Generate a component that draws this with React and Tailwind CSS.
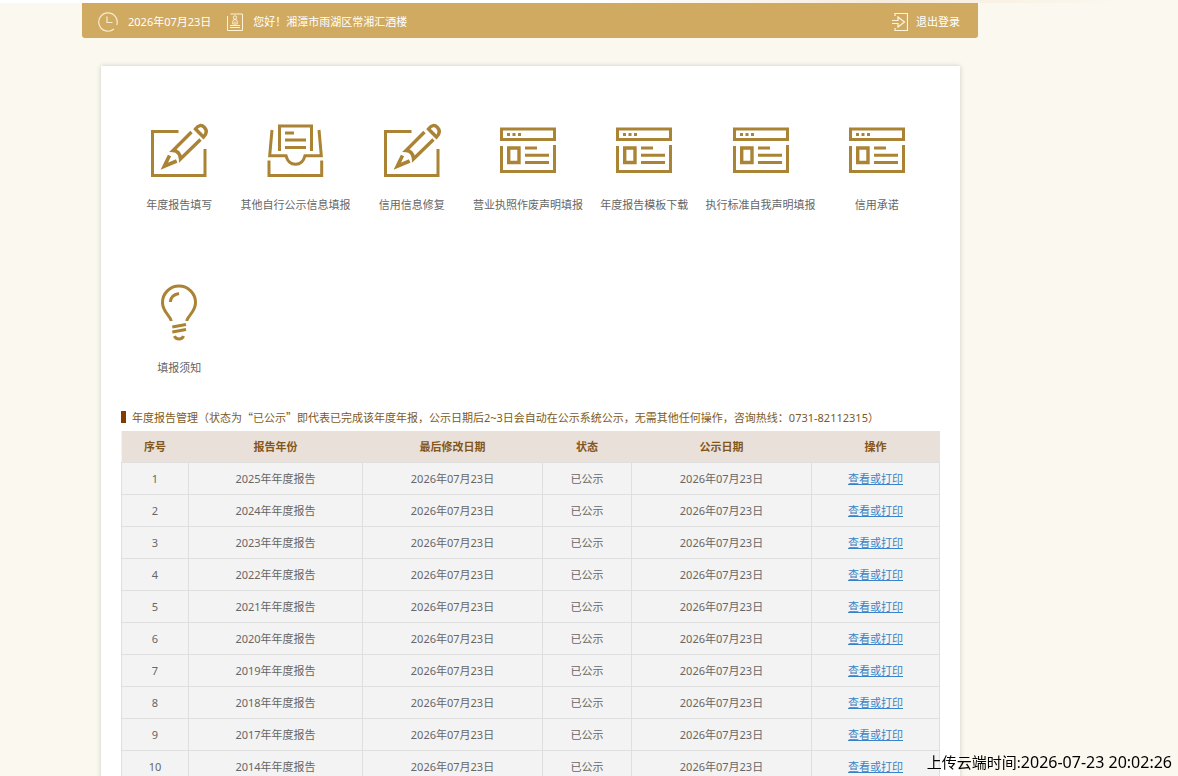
import React from "react";

function EditIcon() {
  return (
    <svg viewBox="0 0 60 60" className="size-15" fill="none" stroke="#ab8335" strokeWidth="3" aria-hidden="true">
      <path d="M29.5 11.5H3.5V55.5H56V29" />
      <path d="M42.5 12L24 30.5Q31 31 31.5 39L51.5 19.5" strokeWidth="3.400" />
      <path d="M46.500 9Q51 3 55.500 7.500Q59.500 12 54.500 17Z" strokeWidth="3.400" />
      <path d="M20.500 35.500L15.300 46.200L27.700 41" strokeWidth="3.600" />
      <path d="M13.300 48L16.500 40.500L21 45Z" fill="#ab8335" stroke="none" />
    </svg>
  );
}

function InboxIcon() {
  return (
    <svg viewBox="0 0 60 60" className="size-15" fill="none" stroke="#ab8335" strokeWidth="3" aria-hidden="true">
      <path d="M7 10L4.700 35.700H21C22.500 42 26 44.300 30.500 44.300S38.500 42 40 35.700H56.300L54 10" />
      <path d="M4 40.500V55.500H56.700V40.500" />
      <path d="M14.500 31V6H46.500V31" />
      <path d="M20 13H29M20 20H41M20 27.500H41" />
    </svg>
  );
}

function WindowIcon() {
  return (
    <svg viewBox="0 0 60 60" className="size-15" fill="none" stroke="#ab8335" strokeWidth="3" aria-hidden="true">
      <path d="M3.500 9H56.500V19.500H3.500Z" />
      <path d="M9 14.500H12M14.500 14.500H17.500M20 14.500H23" />
      <path d="M3.500 26V51.500H56.500V25" />
      <path d="M10.700 28H21V42.500H10.700Z" strokeWidth="3.400" />
      <path d="M27 28H39M27 35.200H51M27 42.500H51" />
    </svg>
  );
}

function BulbIcon() {
  return (
    <svg viewBox="0 0 60 60" className="size-15" fill="none" stroke="#ab8335" strokeWidth="3" aria-hidden="true">
      <path d="M22.300 38C21 32 13.500 29 13.500 19.500A16.500 16.500 0 0 1 46.500 19.500C46.500 29 39 32 37.700 38" />
      <path d="M21.300 19Q21.500 12 30 10.500" />
      <path d="M23.300 44L37 41.500M23.300 49L37 46.500" />
      <path d="M25.500 53Q26.500 56 30 56T34.500 53" />
    </svg>
  );
}

function ClockIcon() {
  return (
    <svg viewBox="0 0 20 20" className="size-5" fill="none" stroke="#f8ead0" strokeWidth="1.2" aria-hidden="true">
      <path d="M16 17A9.200 9.200 0 1 1 18.700 13" />
      <path d="M9 4.500V10.500H14.500" />
    </svg>
  );
}

function BadgeIcon() {
  return (
    <svg viewBox="0 0 16 18" className="h-[18px] w-4" fill="none" stroke="#fdf1d8" aria-hidden="true">
      <path d="M3.500 1H15.500V17.500H0.500V3" />
      <path d="M3 12.500H13M3 14.500H13" />
      <circle cx="8" cy="4.500" r="1.700" />
      <path d="M5.800 11V8.500Q5.800 6.500 8 6.500T10.200 8.500V11ZM8 8.500V10" />
    </svg>
  );
}

function ExitIcon() {
  return (
    <svg viewBox="0 0 16 18" className="h-[18px] w-4" fill="none" stroke="#fff5df" aria-hidden="true">
      <path d="M3 3V0.500H15.500V17.500H3V15" strokeWidth="1.200" />
      <path d="M0 7.500H6V4L12.500 9L6 14V10.500H0" strokeWidth="1.200" />
    </svg>
  );
}

const entries = [
  ["年度报告填写", EditIcon],
  ["其他自行公示信息填报", InboxIcon],
  ["信用信息修复", EditIcon],
  ["营业执照作废声明填报", WindowIcon],
  ["年度报告模板下载", WindowIcon],
  ["执行标准自我声明填报", WindowIcon],
  ["信用承诺", WindowIcon],
  ["填报须知", BulbIcon],
];

const headings = [
  ["序号", "w-[67px]"],
  ["报告年份", "w-[174px]"],
  ["最后修改日期", "w-[180px]"],
  ["状态", "w-[89px]"],
  ["公示日期", "w-[180px]"],
  ["操作", "w-[128px]"],
];

const years = [2025, 2024, 2023, 2022, 2021, 2020, 2019, 2018, 2017, 2014];
const cell = "h-8 border border-[#dfdfdf] px-0 pt-0.5 pb-0";

export default function App() {
  return (
    <div className="h-screen overflow-hidden bg-[#fbf8ef] font-['Noto_Sans','Noto_Sans_CJK_SC',sans-serif] text-[11px] leading-4 text-[#666]">
      <div className="h-[3px] bg-linear-to-r from-white from-50% via-[#f6ecdd] via-75% to-[#fbf8ef] to-95%" />
      <div className="ml-[82px] max-w-[896px]">
        <header className="flex h-[35px] items-center rounded-b-[3px] bg-[#d0aa61] pt-0.5 pr-[18px] pl-4 text-white">
          <ClockIcon />
          <time className="ml-[10px]">2026年07月23日</time>
          <span className="ml-4 flex items-center gap-[10px]">
            <BadgeIcon />
            您好！湘潭市雨湖区常湘汇酒楼
          </span>
          <a href="#logout" className="ml-auto flex items-center gap-2">
            <ExitIcon />
            退出登录
          </a>
        </header>

        <main className="mr-[18px] ml-[19px] mt-7 bg-white px-5 pt-[54px] pb-10 shadow-[0_0_5px_rgba(0,0,0,0.18)]">
          <nav className="grid grid-cols-7 gap-y-[70px] pr-[5px]">
            {entries.map(([label, Icon]) => (
              <a key={label} href="#entry" className="flex flex-col items-center gap-[17px] whitespace-nowrap">
                <Icon />
                <span>{label}</span>
              </a>
            ))}
          </nav>

          <h2 className="mt-[33px] flex h-4 items-center gap-[6px] whitespace-nowrap text-[#7d5a1e]">
            <span className="h-3 w-[5px] bg-[#833c00]" />
            <span>
              年度报告管理（状态为
              <span className="font-['Noto_Sans_CJK_SC',sans-serif]">“已公示”</span>
              即代表已完成该年度年报，公示日期后2~3日会自动在公示系统公示，无需其他任何操作，咨询热线：0731-82112315）
            </span>
          </h2>

          <table className="mt-[6px] w-full table-fixed border-collapse bg-[#f3f3f3] text-center">
            <thead className="bg-[#e9e1d9] text-[#83561c]">
              <tr>
                {headings.map(([label, width]) => (
                  <th key={label} scope="col" className={`h-[31px] px-0 pt-0.5 pb-0 font-bold ${width}`}>
                    {label}
                  </th>
                ))}
              </tr>
            </thead>
            <tbody>
              {years.map((year, i) => (
                <tr key={year}>
                  <td className={cell}>{i + 1}</td>
                  <td className={cell}>{year}年年度报告</td>
                  <td className={cell}>2026年07月23日</td>
                  <td className={cell}>已公示</td>
                  <td className={cell}>2026年07月23日</td>
                  <td className={cell}>
                    <a href="#report" className="text-[#3b82c8] underline">查看或打印</a>
                  </td>
                </tr>
              ))}
            </tbody>
          </table>
        </main>
      </div>

      <div className="fixed right-[6px] bottom-1 flex items-baseline text-[15px] leading-5 text-black">
        上传云端时间:<time className="text-base leading-5">2026-07-23 20:02:26</time>
      </div>
    </div>
  );
}
